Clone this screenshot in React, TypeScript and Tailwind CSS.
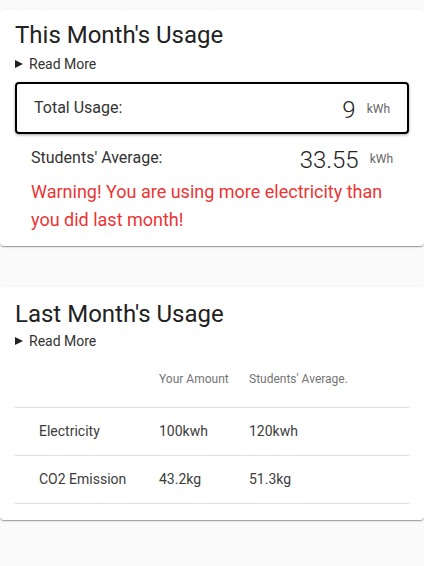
import * as React from "react";

const Caret = () => (
  <svg width="8" height="8" viewBox="0 0 8 8" className="shrink-0">
    <path d="M0 0 L8 4 L0 8 Z" fill="#222" />
  </svg>
);

const ReadMore = ({ className }: { className: string }) => (
  <div className={"flex items-center gap-[6px] h-5 text-sm leading-5 text-[#333] " + className}>
    <Caret />
    <span>Read More</span>
  </div>
);

const cardShadow =
  "shadow-[0px_2px_1px_-1px_rgba(0,0,0,0.2),0px_1px_1px_0px_rgba(0,0,0,0.14),0px_1px_3px_0px_rgba(0,0,0,0.12)]";

const rows = [
  { label: "Electricity", mine: "100kwh", avg: "120kwh" },
  { label: "CO2 Emission", mine: "43.2kg", avg: "51.3kg" },
];

const App = () => {
  return (
    <div className="min-h-[566px] bg-[#fafafa] font-[Roboto,Arial,sans-serif] pt-[10px]">
      {/* this month */}
      <div className={"bg-white rounded-[4px] px-[15px] pt-[9px] pb-[12px] " + cardShadow}>
        <h2 className="text-[24px] leading-8 text-[#222]">This Month's Usage</h2>
        <ReadMore className="mt-[3px]" />
        <div className="mt-[8px] h-[52px] border-2 border-black rounded-[4px] shadow-[0_1px_3px_rgba(0,0,0,0.35)] flex items-center pl-[17px] pr-[17px]">
          <span className="text-base text-[#333]">Total Usage:</span>
          <span className="ml-auto text-[24px] font-light text-[#222] leading-none mt-[4px]">9</span>
          <span className="ml-[11px] text-xs text-[#666] mt-[1px]">kWh</span>
        </div>
        <div className="mt-[4px] h-[40px] flex items-center px-[16px]">
          <span className="text-base text-[#333]">Students' Average:</span>
          <span className="ml-auto text-[24px] font-light text-[#222] leading-none mt-[4px]">33.55</span>
          <span className="ml-[11px] text-xs text-[#666] mt-[1px]">kWh</span>
        </div>
        <p className="px-[16px] text-[18px] leading-[28px] text-[#eb3434]">
          Warning! You are using more electricity than you did last month!
        </p>
      </div>

      {/* last month */}
      <div className={"mt-[41px] bg-white rounded-[4px] px-[15px] pt-[11px] pb-[16px] " + cardShadow}>
        <h2 className="text-[24px] leading-8 text-[#222]">Last Month's Usage</h2>
        <ReadMore className="mt-[1px]" />
        <table className="w-full border-collapse">
          <thead>
            <tr className="h-[56px] border-b border-[#e0e0e0]">
              <th className="w-[143px]"></th>
              <th className="w-[90px] text-left text-xs font-normal text-[#757575] pl-[1px]">Your Amount</th>
              <th className="text-left text-xs font-normal text-[#757575] pl-[1px]">Students' Average.</th>
            </tr>
          </thead>
          <tbody>
            {rows.map((r) => (
              <tr key={r.label} className="h-[48px] border-b border-[#e0e0e0] text-sm text-[#3c3c3c]">
                <td className="pl-[24px]">{r.label}</td>
                <td className="pl-[1px]">{r.mine}</td>
                <td className="pl-[1px]">{r.avg}</td>
              </tr>
            ))}
          </tbody>
        </table>
      </div>
    </div>
  );
};

export default App;
